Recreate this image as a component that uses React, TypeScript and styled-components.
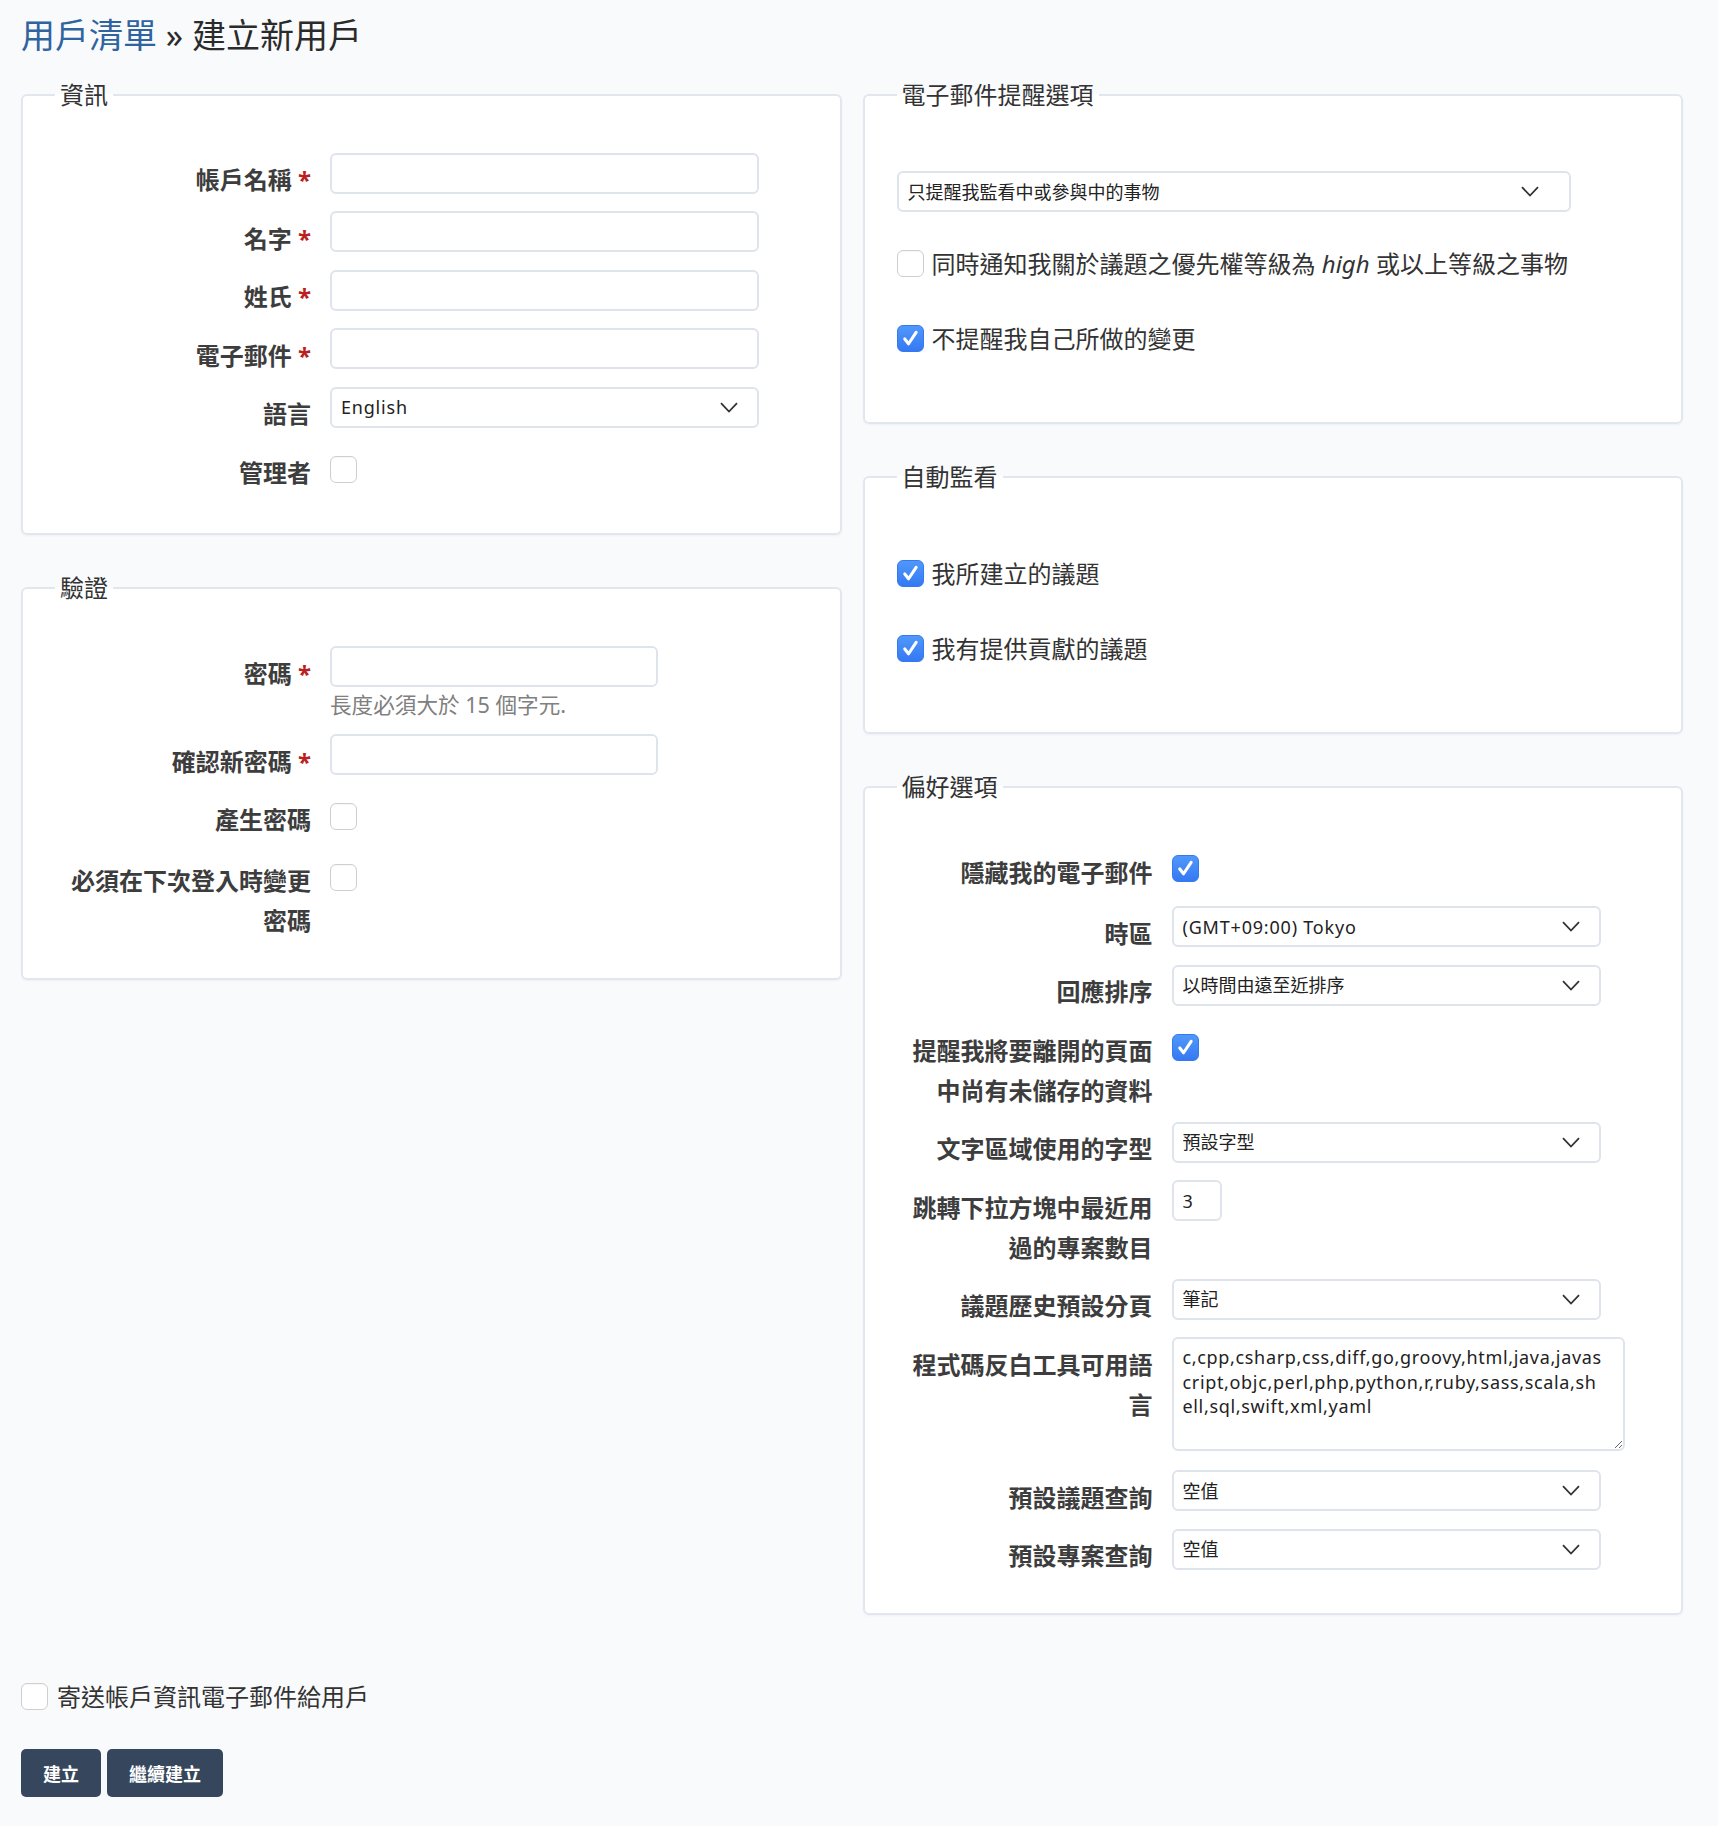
import React, { FunctionComponent } from 'react';
import styled, { createGlobalStyle } from 'styled-components';

const GlobalStyle = createGlobalStyle`
    html, body {
        margin: 0;
        padding: 0;
        background: #f9fafc;
    }
    body {
        font-family: "Noto Sans", "Noto Sans CJK TC", sans-serif;
        color: #333;
    }
`;

const Page = styled.div`
    padding: 15px 35px 20px 21px;
`;

const Title = styled.h2`
    margin: 0 0 24.5px;
    font-size: 34px;
    line-height: 40px;
    font-weight: 400;
    color: #2b2b2b;
`;

const TitleLink = styled.a`
    color: #2f649e;
    text-decoration: none;
`;

const Columns = styled.div`
    display: grid;
    grid-template-columns: 1fr 1fr;
    column-gap: 21px;
    align-items: start;
`;

const Column = styled.div`
    display: flex;
    flex-direction: column;
    gap: 38px;
`;

const Box = styled.fieldset<{ $bottom: number }>`
    margin: 0;
    padding: 0 0 ${(p) => p.$bottom}px;
    min-width: 0;
    border: 2px solid #e1e6ef;
    border-radius: 6px;
    background: #fff;
    box-shadow: 0 1px 2px rgba(40, 60, 90, 0.05);
`;

const Legend = styled.legend`
    margin-left: 32px;
    padding: 0 5px;
    font-size: 24px;
    line-height: 30px;
    color: #333;
`;

const Tabular = styled.div`
    padding: 43px 0 0 38px;
`;

const Row = styled.div<{ $check?: boolean }>`
    display: grid;
    grid-template-columns: 250px 1fr;
    column-gap: 19px;
    align-items: start;
    min-height: ${(p) => (p.$check ? 50 : 47.5)}px;
    margin-bottom: 11px;
`;

const Label = styled.label`
    padding-top: 7.5px;
    font-size: 24px;
    line-height: 40px;
    font-weight: 700;
    text-align: right;
    color: #3d3d3d;
`;

const Required = styled.span`
    color: #bb1f1f;
`;

const Field = styled.div`
    display: flex;
    flex-direction: column;
    align-items: flex-start;
`;

const TextInput = styled.input<{ $w: number }>`
    box-sizing: border-box;
    width: ${(p) => p.$w}px;
    height: 41px;
    margin: 0;
    padding: 0 9px;
    border: 2px solid #dfe4ec;
    border-radius: 6px;
    background: #fff;
    font-family: inherit;
    font-size: 18px;
    color: #222;
    outline: none;
`;

const SelectBox = styled.div<{ $w: number }>`
    position: relative;
    width: ${(p) => p.$w}px;
`;

const Select = styled.select<{ $latin?: boolean }>`
    box-sizing: border-box;
    width: 100%;
    height: 41px;
    margin: 0;
    padding: 0 40px 0 9px;
    border: 2px solid #dfe4ec;
    border-radius: 6px;
    background: #fff;
    appearance: none;
    font-family: inherit;
    font-size: 18px;
    letter-spacing: ${(p) => (p.$latin ? '0.8px' : 'normal')};
    color: #222;
    outline: none;
`;

const Chevron = styled.svg<{ $right: number }>`
    position: absolute;
    right: ${(p) => p.$right}px;
    top: 15px;
    width: 18px;
    height: 11px;
    pointer-events: none;
`;

const Hint = styled.em`
    font-style: normal;
    font-size: 21.6px;
    line-height: 36px;
    color: #808080;
`;

const CodeArea = styled.textarea`
    box-sizing: border-box;
    width: 453px;
    height: 114px;
    margin: 0 0 8px;
    padding: 6px 16px 6px 9px;
    border: 2px solid #dfe4ec;
    border-radius: 6px;
    background: #fff;
    font-family: inherit;
    font-size: 18px;
    line-height: 24.5px;
    letter-spacing: 0.66px;
    color: #222;
    outline: none;
`;

const CheckBox = styled.span<{ $on?: boolean; $top?: number }>`
    display: inline-flex;
    align-items: center;
    justify-content: center;
    flex: none;
    box-sizing: border-box;
    width: 27px;
    height: 27px;
    margin-top: ${(p) => p.$top ?? 0}px;
    border-radius: 6px;
    border: 1px solid ${(p) => (p.$on ? '#3479ee' : '#cfcfcf')};
    background: ${(p) => (p.$on ? 'linear-gradient(#5198fb, #3479f2)' : '#fff')};
    box-shadow: ${(p) => (p.$on ? 'none' : 'inset 0 1px 1px rgba(0,0,0,0.04)')};
`;

const Plain = styled.div`
    padding: 61.5px 0 2.5px 32px;
`;

const PlainSelect = styled(SelectBox)`
    margin-bottom: 31.5px;
`;

const CheckLine = styled.label`
    display: flex;
    align-items: center;
    gap: 8px;
    height: 40px;
    font-size: 24px;
    line-height: 40px;
    color: #333;

    & + & {
        margin-top: 35px;
    }
`;

const SendRow = styled(CheckLine)`
    margin-top: 61.5px;
    gap: 9px;
`;

const Actions = styled.div`
    display: flex;
    gap: 6px;
    margin-top: 32px;
`;

const Button = styled.button`
    height: 48px;
    padding: 0 22px;
    border: 0;
    border-radius: 5px;
    background: #36475d;
    color: #fff;
    font-family: inherit;
    font-size: 18px;
    font-weight: 700;
`;

const Check: FunctionComponent<{ on?: boolean; top?: number }> = ({ on, top }) => (
    <CheckBox $on={on} $top={top} role="checkbox" aria-checked={!!on}>
        {on && (
            <svg width="27" height="27" viewBox="0 0 27 27">
                <path
                    d="M7.3 14 L11.4 19.2 L19.6 6.8"
                    fill="none"
                    stroke="#fff"
                    strokeWidth="3.3"
                    strokeLinecap="round"
                    strokeLinejoin="round"
                />
            </svg>
        )}
    </CheckBox>
);

const Dropdown: FunctionComponent<{
    width: number;
    value: string;
    latin?: boolean;
    chevronRight?: number;
}> = ({ width, value, latin, chevronRight = 21 }) => (
    <SelectBox $w={width}>
        <Select defaultValue={value} $latin={latin}>
            <option>{value}</option>
        </Select>
        <Chevron viewBox="0 0 18 11" $right={chevronRight}>
            <path d="M1 1.2 L9 9.5 L17 1.2" fill="none" stroke="#333" strokeWidth="1.8" />
        </Chevron>
    </SelectBox>
);

const FormRow: FunctionComponent<{
    label: string;
    required?: boolean;
    check?: boolean;
    children: React.ReactNode;
}> = ({ label, required, check, children }) => (
    <Row $check={check}>
        <Label>
            {label}
            {required && <Required> *</Required>}
        </Label>
        <Field>{children}</Field>
    </Row>
);

const codeLanguages =
    'c,cpp,csharp,css,diff,go,groovy,html,java,javascript,objc,perl,php,python,r,ruby,sass,scala,shell,sql,swift,xml,yaml';

export default function App() {
    return (
        <Page>
            <GlobalStyle />
            <Title>
                <TitleLink href="#">用戶清單</TitleLink> » 建立新用戶
            </Title>
            <Columns>
                <Column>
                    <Box $bottom={27}>
                        <Legend>資訊</Legend>
                        <Tabular>
                            <FormRow label="帳戶名稱" required>
                                <TextInput $w={429} />
                            </FormRow>
                            <FormRow label="名字" required>
                                <TextInput $w={429} />
                            </FormRow>
                            <FormRow label="姓氏" required>
                                <TextInput $w={429} />
                            </FormRow>
                            <FormRow label="電子郵件" required>
                                <TextInput $w={429} />
                            </FormRow>
                            <FormRow label="語言">
                                <Dropdown width={429} value="English" latin />
                            </FormRow>
                            <FormRow label="管理者" check>
                                <Check top={10.5} />
                            </FormRow>
                        </Tabular>
                    </Box>
                    <Box $bottom={26}>
                        <Legend>驗證</Legend>
                        <Tabular>
                            <FormRow label="密碼" required>
                                <TextInput $w={328} type="password" />
                                <Hint>長度必須大於 15 個字元.</Hint>
                            </FormRow>
                            <FormRow label="確認新密碼" required>
                                <TextInput $w={328} type="password" />
                            </FormRow>
                            <FormRow label="產生密碼" check>
                                <Check top={10.5} />
                            </FormRow>
                            <FormRow label="必須在下次登入時變更密碼" check>
                                <Check top={10.5} />
                            </FormRow>
                        </Tabular>
                    </Box>
                </Column>
                <Column>
                    <Box $bottom={61}>
                        <Legend>電子郵件提醒選項</Legend>
                        <Plain>
                            <PlainSelect $w={674}>
                                <Select defaultValue="only_my_events">
                                    <option value="only_my_events">只提醒我監看中或參與中的事物</option>
                                </Select>
                                <Chevron viewBox="0 0 18 11" $right={32}>
                                    <path
                                        d="M1 1.2 L9 9.5 L17 1.2"
                                        fill="none"
                                        stroke="#333"
                                        strokeWidth="1.8"
                                    />
                                </Chevron>
                            </PlainSelect>
                            <CheckLine>
                                <Check />
                                <span>
                                    同時通知我關於議題之優先權等級為 <i>high</i> 或以上等級之事物
                                </span>
                            </CheckLine>
                            <CheckLine>
                                <Check on />
                                <span>不提醒我自己所做的變更</span>
                            </CheckLine>
                        </Plain>
                    </Box>
                    <Box $bottom={61}>
                        <Legend>自動監看</Legend>
                        <Plain>
                            <CheckLine>
                                <Check on />
                                <span>我所建立的議題</span>
                            </CheckLine>
                            <CheckLine>
                                <Check on />
                                <span>我有提供貢獻的議題</span>
                            </CheckLine>
                        </Plain>
                    </Box>
                    <Box $bottom={26}>
                        <Legend>偏好選項</Legend>
                        <Tabular>
                            <FormRow label="隱藏我的電子郵件" check>
                                <Check on top={10} />
                            </FormRow>
                            <FormRow label="時區">
                                <Dropdown width={429} value="(GMT+09:00) Tokyo" latin />
                            </FormRow>
                            <FormRow label="回應排序">
                                <Dropdown width={429} value="以時間由遠至近排序" />
                            </FormRow>
                            <FormRow label="提醒我將要離開的頁面中尚有未儲存的資料" check>
                                <Check on top={10.5} />
                            </FormRow>
                            <FormRow label="文字區域使用的字型">
                                <Dropdown width={429} value="預設字型" />
                            </FormRow>
                            <FormRow label="跳轉下拉方塊中最近用過的專案數目">
                                <TextInput $w={50} defaultValue="3" />
                            </FormRow>
                            <FormRow label="議題歷史預設分頁">
                                <Dropdown width={429} value="筆記" />
                            </FormRow>
                            <FormRow label="程式碼反白工具可用語言">
                                <CodeArea defaultValue={codeLanguages} />
                            </FormRow>
                            <FormRow label="預設議題查詢">
                                <Dropdown width={429} value="空值" />
                            </FormRow>
                            <FormRow label="預設專案查詢">
                                <Dropdown width={429} value="空值" />
                            </FormRow>
                        </Tabular>
                    </Box>
                </Column>
            </Columns>
            <SendRow>
                <Check />
                <span>寄送帳戶資訊電子郵件給用戶</span>
            </SendRow>
            <Actions>
                <Button>建立</Button>
                <Button>繼續建立</Button>
            </Actions>
        </Page>
    );
}
